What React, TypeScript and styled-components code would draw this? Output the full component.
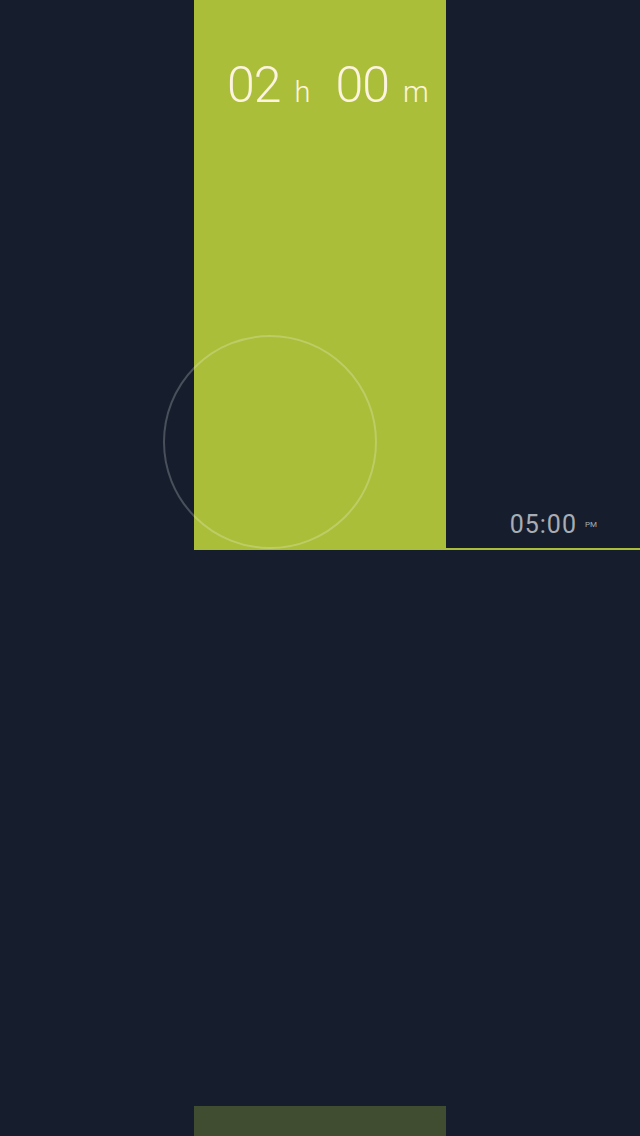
import React from "react";
import styled, { createGlobalStyle } from "styled-components";

const GlobalStyle = createGlobalStyle`
html, body {
  margin: 0;
  padding: 0;
  background: #161e2d;
}
`;

const Page = styled.div`
width: 640px;
height: 1136px;
display: flex;
flex-direction: column;
background-color: #161e2d;
font-family: Roboto, "Liberation Sans", sans-serif;
overflow: hidden;
`;

const Top = styled.div`
height: 550px;
display: grid;
grid-template-columns: 194px 252px 194px;
position: relative;
`;

const Column = styled.div``;

const Bar = styled.div<{ dim?: boolean }>`
background-color: ${(p) => (p.dim ? "#414d31" : "#abbe39")};
`;

const Duration = styled.div`
display: flex;
align-items: baseline;
padding: 56px 0 0 33px;
color: #fcf4e0;
font-weight: 300;
`;

const Big = styled.span`
font-size: 50px;
letter-spacing: -1px;
`;

const Unit = styled.span<{ gap: number }>`
font-size: 29px;
margin-left: 14px;
margin-right: ${(p) => p.gap}px;
`;

const TimeCell = styled.div`
display: flex;
align-items: flex-end;
justify-content: flex-end;
border-bottom: 2px solid #abbe39;
padding: 0 43px 9px 0;
color: #a9adb3;
`;

const Time = styled.span`
font-size: 25px;
font-weight: 400;
letter-spacing: 1px;
`;

const Meridiem = styled.span`
font-size: 8px;
margin-left: 8px;
margin-bottom: 10px;
`;

const Ring = styled.div`
position: absolute;
left: 163px;
top: 335px;
width: 210px;
height: 210px;
border: 2px solid rgba(255, 255, 255, 0.22);
border-radius: 50%;
`;

const Spacer = styled.div`
flex: 1;
`;

const Bottom = styled.div`
height: 30px;
display: grid;
grid-template-columns: 194px 252px 194px;
`;

export default function App() {
  return (
    <>
      <GlobalStyle />
      <Page>
        <Top>
          <Column />
          <Bar>
            <Duration>
              <Big>02</Big>
              <Unit gap={25}>h</Unit>
              <Big>00</Big>
              <Unit gap={0}>m</Unit>
            </Duration>
          </Bar>
          <TimeCell>
            <Time>05:00</Time>
            <Meridiem>PM</Meridiem>
          </TimeCell>
          <Ring />
        </Top>
        <Spacer />
        <Bottom>
          <Column />
          <Bar dim />
          <Column />
        </Bottom>
      </Page>
    </>
  );
}
